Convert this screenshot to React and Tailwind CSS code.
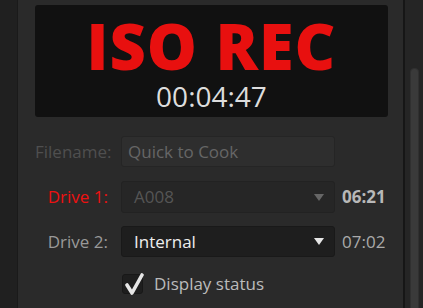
export default function App() {
  const font = { fontFamily: '"Open Sans", "Noto Sans", sans-serif' };

  return (
    <div
      className="w-[423px] h-[308px] flex overflow-hidden bg-[#1c1c1c] select-none"
      style={font}
    >
      {/* left gutter */}
      <div className="w-[18px] h-full bg-[#202020] border-r border-[#1a1a1a]" />

      {/* main panel */}
      <div className="w-[385px] h-full bg-[#2a2a2a] pl-[17px] pt-[5px]">
        {/* record status */}
        <div className="w-[353px] h-[112px] bg-[#111111] rounded-[3px] flex flex-col items-center pt-[11px]">
          <div className="text-[63px] leading-[60px] font-extrabold text-[#e8100f] tracking-[1px]">
            ISO REC
          </div>
          <div className="mt-[5px] text-[28px] leading-[30px] text-[#dddddd]">00:04:47</div>
        </div>

        {/* form */}
        <div className="mt-[19px] flex flex-col">
          <div className="flex items-center h-[31px]">
            <div className="w-[73px] text-right text-[17px] text-[#4f4f4f]">Filename:</div>
            <div className="ml-[13px] w-[214px] h-[31px] rounded-[3px] bg-[#2e2e2e] border border-[#252525] flex items-center px-[6px] text-[17px] text-[#666666]">
              Quick to Cook
            </div>
          </div>

          <div className="flex items-center h-[32px] mt-[14px]">
            <div className="w-[73px] text-right text-[17px] text-[#ee1111]">Drive 1:</div>
            <div className="ml-[13px] w-[214px] h-[32px] rounded-[3px] bg-[#262626] border border-[#222222] flex items-center justify-between pl-[12px] pr-[10px] text-[17px] text-[#555555]">
              <span>A008</span>
              <svg width="10" height="7" viewBox="0 0 10 7">
                <path d="M0 0 H10 L5 7 Z" fill="#666666" />
              </svg>
            </div>
            <div className="ml-[7px] text-[17px] font-bold text-[#b8b8b8]">06:21</div>
          </div>

          <div className="flex items-center h-[31px] mt-[13px]">
            <div className="w-[73px] text-right text-[17px] text-[#999999]">Drive 2:</div>
            <div className="ml-[13px] w-[214px] h-[31px] rounded-[3px] bg-[#1e1e1e] border border-[#191919] flex items-center justify-between pl-[12px] pr-[10px] text-[17px] text-[#eeeeee]">
              <span>Internal</span>
              <svg width="10" height="7" viewBox="0 0 10 7">
                <path d="M0 0 H10 L5 7 Z" fill="#e6e6e6" />
              </svg>
            </div>
            <div className="ml-[7px] text-[17px] text-[#aaaaaa]">07:02</div>
          </div>

          <div className="flex items-center mt-[14px] ml-[87px]">
            <div className="relative w-[21px] h-[20px] rounded-[3px] bg-[#1e1e1e] border border-[#181818]">
              <svg
                className="absolute left-[-1px] top-[-2px]"
                width="23"
                height="23"
                viewBox="0 0 23 23"
              >
                <path
                  d="M5 12 L10 20 L20 2"
                  fill="none"
                  stroke="#e6e6e6"
                  strokeWidth="3.6"
                  strokeLinecap="round"
                  strokeLinejoin="round"
                />
              </svg>
            </div>
            <div className="ml-[11px] text-[17px] text-[#bbbbbb]">Display status</div>
          </div>
        </div>
      </div>

      {/* scrollbar */}
      <div className="w-[20px] h-full bg-[#252525] border-l-2 border-[#161616] flex justify-center pl-[1px]">
        <div className="w-[9px] h-full mt-[68px] rounded-t-[4px] bg-[#3a3a3a] border border-[#303030]" />
      </div>
    </div>
  );
}
